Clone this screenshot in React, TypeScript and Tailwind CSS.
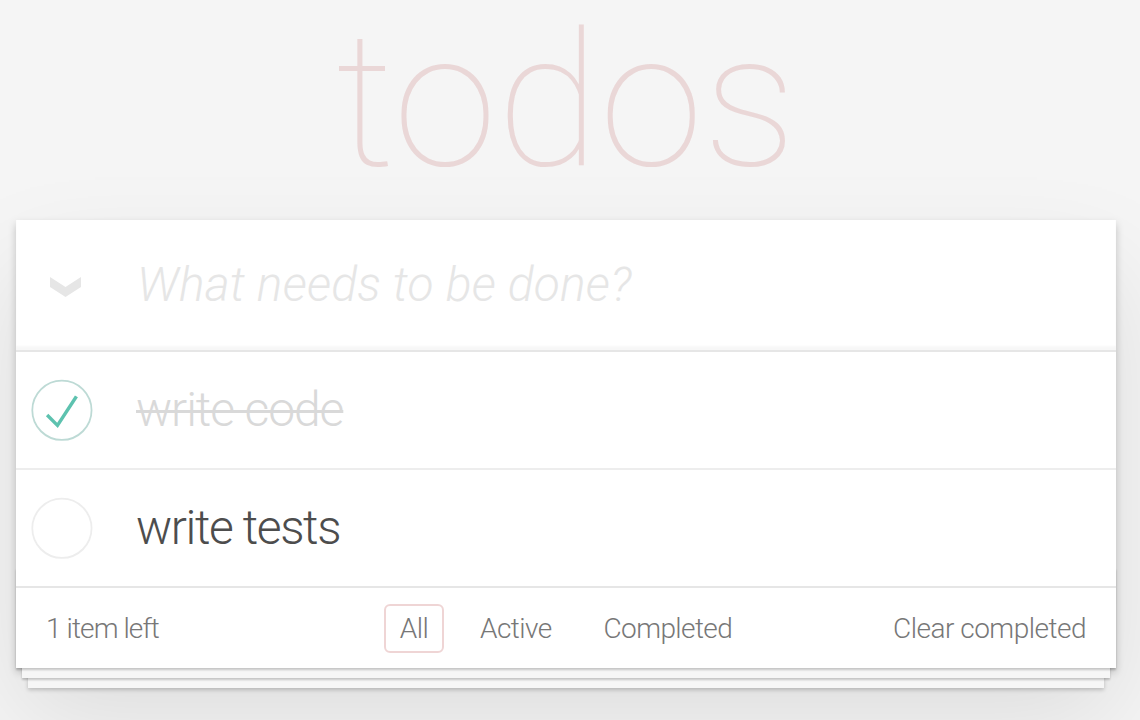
import React from "react";

function Check({ done }: { done: boolean }) {
  return (
    <svg width="80" height="80" viewBox="-10 -18 100 135" className="shrink-0">
      <circle cx="50" cy="50" r="50" fill="none" stroke={done ? "#bddad5" : "#ededed"} strokeWidth="3" />
      {done && <path d="M72 25L42 71 27 56l-4 4 20 20 34-52z" fill="#5dc2af" />}
    </svg>
  );
}

export default function App() {
  return (
    <div className="min-h-[720px] overflow-hidden bg-[#f5f5f5] [font-family:Roboto,'Liberation_Sans',sans-serif] font-light text-[#4d4d4d]">
      <div className="ml-[16px] w-[1100px]">
        <h1 className="h-[220px] text-center text-[188px] leading-[203px] font-thin text-[rgba(175,47,47,0.15)]">todos</h1>
        <section className="relative bg-white shadow-[0_4px_8px_rgba(0,0,0,0.2),0_50px_100px_rgba(0,0,0,0.1)]">
          <div className="flex h-[130px] items-center shadow-[inset_0_-4px_2px_rgba(0,0,0,0.03)]">
            <div className="flex w-[121px] shrink-0 pl-[34px] pt-[4px]">
              <svg width="31" height="20" viewBox="0 0 31 20">
                <polygon points="0,0 15.5,10 31,0 31,10 15.5,20 0,10" fill="#e6e6e6" />
              </svg>
            </div>
            <span className="text-[48px] leading-[1.2] italic font-light tracking-[0.2px] text-[#e6e6e6]">What needs to be done?</span>
          </div>
          <ul className="border-t-2 border-[#e6e6e6]">
            <li className="flex h-[118px] items-center border-b-2 border-[#ededed]">
              <Check done />
              <span className="ml-[40px] text-[48px] leading-[1.2] tracking-[-1.1px] text-[#d9d9d9] line-through decoration-[3px]">write code</span>
            </li>
            <li className="flex h-[116px] items-center">
              <Check done={false} />
              <span className="ml-[40px] text-[48px] leading-[1.2] tracking-[-1.4px] text-[#4d4d4d]">write tests</span>
            </li>
          </ul>
          <footer className="relative grid h-[82px] grid-cols-[1fr_auto_1fr] items-center border-t-2 border-[#e6e6e6] px-[30px] text-[28px] leading-[33px] tracking-[-0.6px] text-[#777]">
            <div className="pointer-events-none absolute inset-x-0 bottom-0 h-[100px] shadow-[0_2px_2px_rgba(0,0,0,0.2),0_16px_0_-6px_#f6f6f6,0_18px_2px_-6px_rgba(0,0,0,0.2),0_32px_0_-12px_#f6f6f6,0_34px_4px_-12px_rgba(0,0,0,0.2)]" />
            <span className="relative tracking-[-0.9px]">1 item left</span>
            <ul className="relative flex gap-[20px]">
              <li className="rounded-[6px] border-2 border-[rgba(175,47,47,0.2)] px-[14px] py-[6px]">All</li>
              <li className="rounded-[6px] border-2 border-transparent px-[14px] py-[6px]">Active</li>
              <li className="rounded-[6px] border-2 border-transparent px-[14px] py-[6px]">Completed</li>
            </ul>
            <span className="relative justify-self-end tracking-[-0.5px]">Clear completed</span>
          </footer>
        </section>
      </div>
    </div>
  );
}
